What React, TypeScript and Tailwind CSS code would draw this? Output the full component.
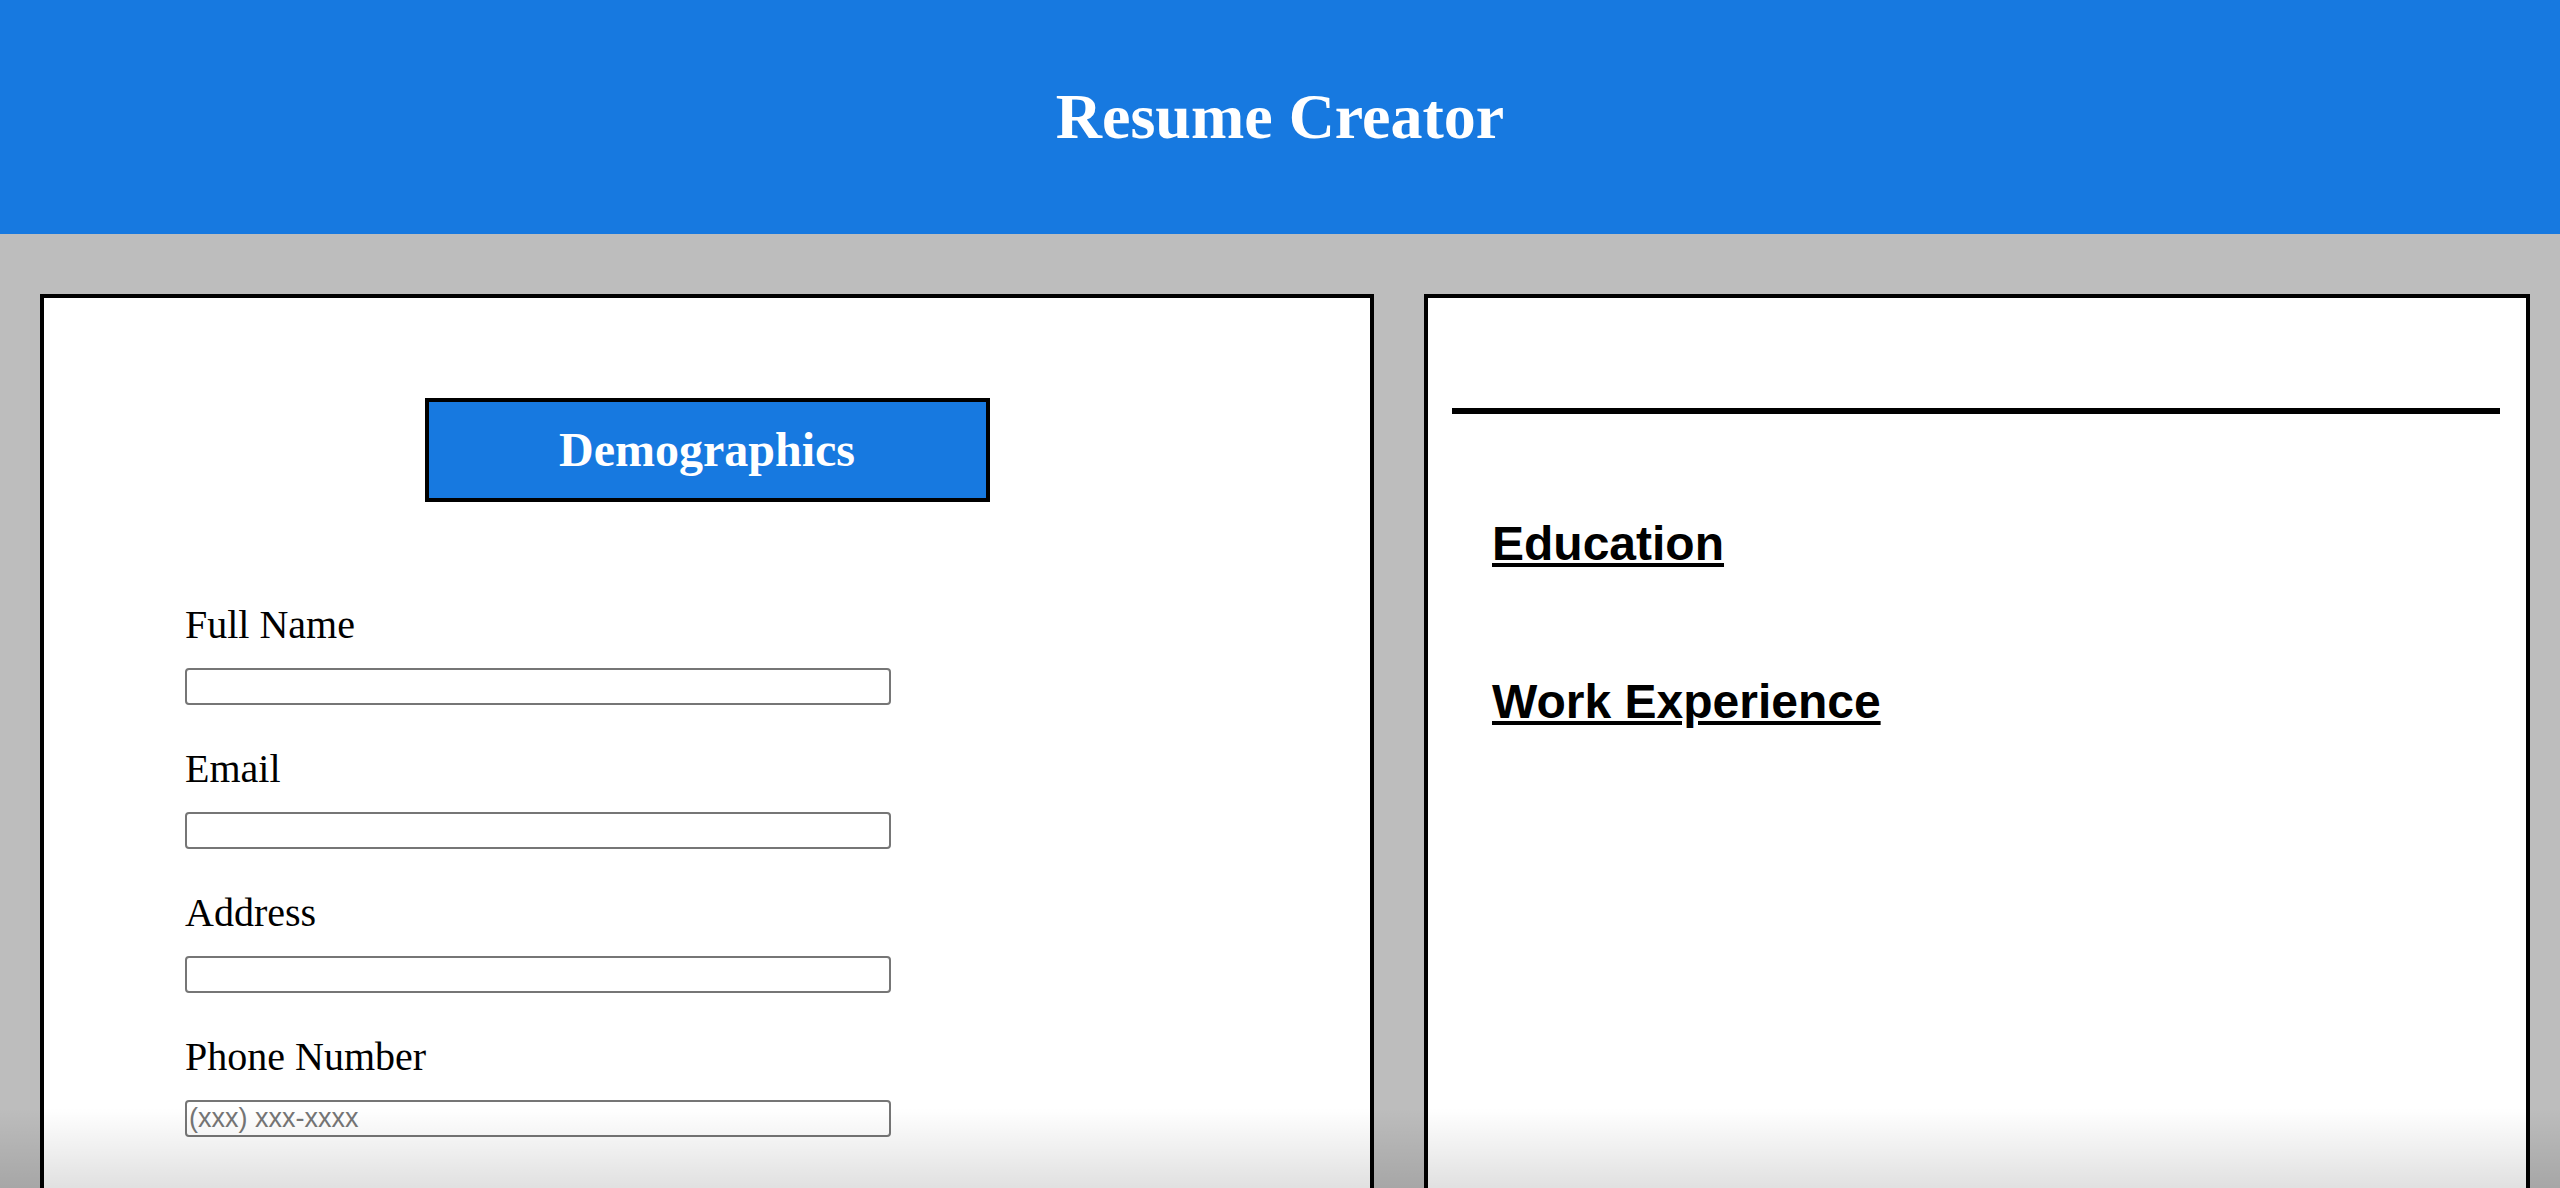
import React from 'react';

const fields = [
  { label: 'Full Name', type: 'text', placeholder: '' },
  { label: 'Email', type: 'email', placeholder: '' },
  { label: 'Address', type: 'text', placeholder: '' },
  { label: 'Phone Number', type: 'tel', placeholder: '(xxx) xxx-xxxx' },
];

const App: React.FC = () => {
  return (
    <div className="relative h-screen overflow-hidden bg-[#bdbdbd] font-['Liberation_Serif',serif]">
      <header className="h-[234px] bg-[#1779e0] flex items-center justify-center">
        <h1 className="text-[64px] font-bold text-white">Resume Creator</h1>
      </header>

      <main className="flex items-start pl-[40px] pt-[60px]">
        {/* form side */}
        <section className="w-[1334px] h-[1000px] shrink-0 bg-white border-[4px] border-black">
          <div className="mt-[100px] flex justify-center">
            <div className="w-[565px] h-[104px] bg-[#1779e0] border-[4px] border-black flex items-center justify-center">
              <h2 className="text-[48px] font-bold text-white">Demographics</h2>
            </div>
          </div>

          <form className="pl-[141px] mt-[100px]">
            {fields.map((f, i) => (
              <div key={f.label} className={i > 0 ? 'mt-[41px]' : ''}>
                <label className="block text-[40px] leading-[46px] text-black">{f.label}</label>
                <input
                  type={f.type}
                  placeholder={f.placeholder}
                  className="mt-[20px] block w-[706px] h-[37px] px-[2px] border-2 border-[#767676] rounded-[4px] bg-white font-['Liberation_Sans',sans-serif] text-[27px] placeholder:text-[#767676]"
                />
              </div>
            ))}
          </form>
        </section>

        {/* preview side */}
        <section className="ml-[50px] w-[1106px] h-[1000px] shrink-0 bg-white border-[4px] border-black font-['Liberation_Sans',sans-serif]">
          <div className="mt-[110px] ml-[24px] mr-[26px] h-[6px] bg-black" />
          <div className="px-[64px]">
            <h2 className="mt-[102px] text-[48px] leading-[55px] font-bold underline text-black">Education</h2>
            <h2 className="mt-[103px] text-[48px] leading-[55px] font-bold underline text-black">Work Experience</h2>
          </div>
        </section>
      </main>

      <div className="pointer-events-none absolute bottom-0 left-0 right-0 h-[80px] bg-gradient-to-b from-transparent to-black/[0.12]" />
    </div>
  );
};

export default App;
